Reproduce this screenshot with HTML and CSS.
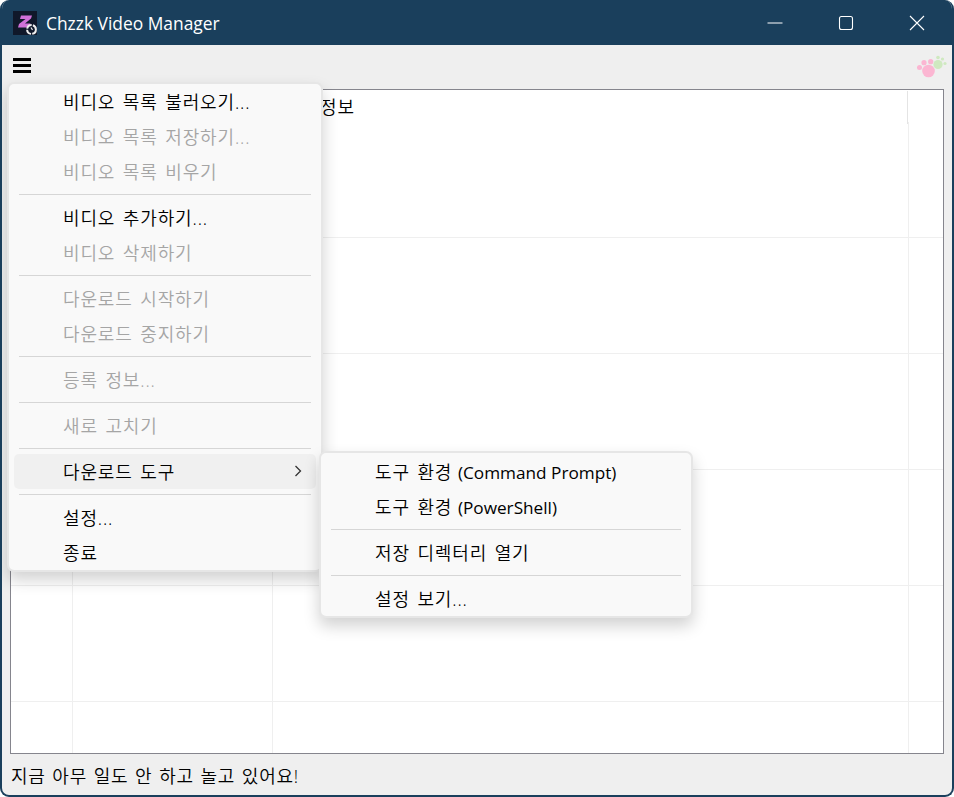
FILE: index.html
```html
<!DOCTYPE html>
<html lang="ko">
<head>
<meta charset="utf-8">
<title>Chzzk Video Manager</title>
<link rel="stylesheet" href="styles.css">
</head>
<body>
<div class="window">
  <header class="titlebar">
    <svg class="app-icon" width="24" height="24" viewBox="0 0 24 24">
      <rect width="24" height="24" fill="#10182a"/>
      <path d="M8 4.5h11l-1 3-6 5h5.5l-2 4H5l1-3.5 6.5-5H7z" fill="#d070d8"/>
      <circle cx="18.5" cy="18.5" r="4.4" fill="#10182a" stroke="#eee" stroke-width="2" stroke-dasharray="6 1.2"/>
      <path d="M18 16.5l1.5 2.5" stroke="#eee" stroke-width="1.2"/>
    </svg>
    <span class="title">Chzzk Video Manager</span>
    <div class="controls">
      <button class="ctl"><svg width="16" height="16" viewBox="0 0 16 16"><path d="M0.5 8h15" stroke="#fff" fill="none"/></svg></button>
      <button class="ctl"><svg width="16" height="16" viewBox="0 0 16 16"><rect x="1.5" y="1.5" width="13" height="13" rx="2" stroke="#fff" fill="none" stroke-width="1.1"/></svg></button>
      <button class="ctl"><svg width="16" height="16" viewBox="0 0 16 16"><path d="M1 1l14 14M15 1L1 15" stroke="#fff" fill="none" stroke-width="1.1"/></svg></button>
    </div>
  </header>
  <div class="toolbar">
    <div class="hamburger"><i></i><i></i><i></i></div>
    <svg class="paw" width="32" height="26" viewBox="0 0 32 26">
      <g fill="#cfe9c0"><circle cx="23" cy="11.5" r="4.6"/><circle cx="23" cy="4.5" r="1.8"/><circle cx="27.5" cy="6" r="1.6"/><circle cx="30" cy="10.5" r="1.6"/></g>
      <g fill="#fbb6d2"><circle cx="13.5" cy="18" r="6.3"/><circle cx="4.5" cy="14.5" r="2.5"/><circle cx="9" cy="9.7" r="2.6"/><circle cx="15.7" cy="8.7" r="2.6"/></g>
    </svg>
  </div>
  <main class="table">
    <div class="thead">
      <div class="th"></div>
      <div class="th"></div>
      <div class="th th-info">정보</div>
      <div class="th th-line"></div>
    </div>
    <div class="row"><div></div><div></div><div></div><div></div></div>
    <div class="row"><div></div><div></div><div></div><div></div></div>
    <div class="row"><div></div><div></div><div></div><div></div></div>
    <div class="row"><div></div><div></div><div></div><div></div></div>
    <div class="row"><div></div><div></div><div></div><div></div></div>
    <div class="row row-last"><div></div><div></div><div></div><div></div></div>
  </main>
  <footer class="status">지금 아무 일도 안 하고 놀고 있어요!</footer>

  <nav class="menu menu-main">
    <div class="item">비디오 목록 불러오기...</div>
    <div class="item off">비디오 목록 저장하기...</div>
    <div class="item off">비디오 목록 비우기</div>
    <div class="sep"></div>
    <div class="item">비디오 추가하기...</div>
    <div class="item off">비디오 삭제하기</div>
    <div class="sep"></div>
    <div class="item off">다운로드 시작하기</div>
    <div class="item off">다운로드 중지하기</div>
    <div class="sep"></div>
    <div class="item off">등록 정보...</div>
    <div class="sep"></div>
    <div class="item off">새로 고치기</div>
    <div class="sep"></div>
    <div class="item active">다운로드 도구
      <svg class="chev" width="8" height="12" viewBox="0 0 8 12"><path d="M1.5 1l5 5-5 5" fill="none" stroke="#333" stroke-width="1.3"/></svg>
    </div>
    <div class="sep"></div>
    <div class="item">설정...</div>
    <div class="item">종료</div>
  </nav>
  <nav class="menu menu-sub">
    <div class="item">도구 환경 <span class="lat">(Command Prompt)</span></div>
    <div class="item">도구 환경 <span class="lat">(PowerShell)</span></div>
    <div class="sep"></div>
    <div class="item">저장 디렉터리 열기</div>
    <div class="sep"></div>
    <div class="item">설정 보기...</div>
  </nav>
</div>
</body>
</html>
```
FILE: styles.css
```css
* { box-sizing: border-box; }
html, body { margin: 0; height: 100%; background: #fff; overflow: hidden; }
body { font-family: "Open Sans", "Noto Sans CJK KR", sans-serif; color: #000; }
.window {
  position: relative;
  width: 954px;
  height: 797px;
  display: flex;
  flex-direction: column;
  background: #efefef;
  border: 2px solid #1a3f5c;
  border-top: 0;
  border-radius: 9px;
  overflow: hidden;
}
.titlebar {
  height: 45px;
  flex: none;
  background: #1a3f5c;
  display: flex;
  align-items: center;
  padding-left: 11px;
  color: #fff;
}
.app-icon { flex: none; }
.title { margin-left: 9px; font-size: 17.4px; }
.controls { margin-left: auto; display: flex; }
.ctl {
  width: 71px;
  height: 45px;
  padding: 0;
  border: 0;
  background: none;
  display: flex;
  align-items: center;
  justify-content: center;
}
.toolbar {
  height: 44px;
  flex: none;
  display: flex;
  justify-content: space-between;
  padding: 13px 0 0 11px;
}
.hamburger { width: 18px; display: flex; flex-direction: column; gap: 3px; }
.hamburger i { display: block; height: 3px; background: #000; }
.paw { margin: -5px 5px 0 0; }
.table {
  height: 665px;
  flex: none;
  margin: 0 8px;
  background: #fff;
  border: 1px solid #85858d;
  display: flex;
  flex-direction: column;
  overflow: hidden;
}
.thead, .row {
  display: grid;
  flex: none;
}
.thead { height: 32px; grid-template-columns: 62px 200px 634px 1fr; }
.row { grid-template-columns: 62px 200px 636px 1fr; }
.th-info, .item, .status {
  font-size: 18px;
  font-weight: 350;
  letter-spacing: 0.85px;
  word-spacing: 2.1px;
}
.th-info { line-height: 35px; padding-left: 47px; white-space: nowrap; }
.th-line { border-left: 1px solid #e4e4e4; margin: 1px 0; }
.row { height: 116px; border-bottom: 1px solid #efefef; }
.row-last { height: 51px; border-bottom: 0; }
.row > div { border-right: 1px solid #efefef; }
.row > div:last-child { border-right: 0; }
.status {
  flex: 1;
  line-height: 45px;
  padding-left: 9px;
  letter-spacing: 0.72px;
  word-spacing: 1.4px;
}
.menu {
  position: absolute;
  background: #f9f9f9;
  border: 2px solid #e6e6e6;
  border-radius: 7px;
  box-shadow: 0 8px 16px rgba(0, 0, 0, 0.18);
  padding: 0 5px;
}
.menu-main { left: 5px; top: 82px; width: 316px; height: 490px; }
.menu-sub { left: 317px; top: 451px; width: 374px; height: 167px; padding-top: 1px; }
.item {
  position: relative;
  height: 35px;
  line-height: 37px;
  padding-left: 49px;
  border-radius: 5px;
  white-space: nowrap;
}
.lat { margin-left: -2px; font-size: 17.2px; font-weight: 400; letter-spacing: 0; word-spacing: 0; }
.off { color: #a5a5a5; }
.active { background: #f0f0f0; }
.chev { position: absolute; right: 14px; top: 11px; }
.sep { height: 11px; padding: 5px; }
.sep::before { content: ""; display: block; height: 1px; background: #d6d6d6; }
```
